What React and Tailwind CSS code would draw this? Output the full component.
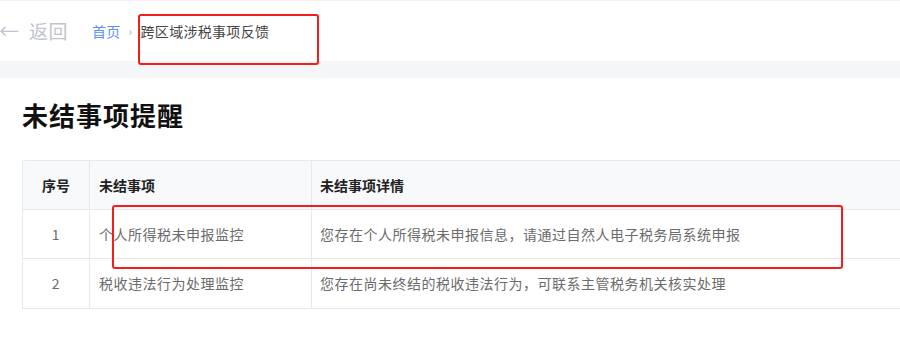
import React from 'react';

const rows = [
  { id: 1, item: '个人所得税未申报监控', detail: '您存在个人所得税未申报信息，请通过自然人电子税务局系统申报' },
  { id: 2, item: '税收违法行为处理监控', detail: '您存在尚未终结的税收违法行为，可联系主管税务机关核实处理' },
];

const App = () => {
  return (
    <div
      className="relative w-[900px] h-[350px] overflow-hidden bg-white"
      style={{ fontFamily: '"Noto Sans CJK SC", "Noto Sans", sans-serif' }}
    >
      {/* Top bar */}
      <div className="h-[61px] border-t border-[#eef1f6] flex items-center">
        <div className="flex items-center text-[#c0c4cc] text-[19px] -ml-[1px] w-[93px]">
          <span className="text-[20px] leading-none mr-[10px]">←</span>
          <span className="tracking-[0.5px]">返回</span>
        </div>
        <div className="flex items-center text-[14px] tracking-[0.3px]">
          <span className="text-[#5b8ff9]">首页</span>
          <span className="text-[#b0b3b8] mx-[8px] text-[12px]">›</span>
          <span className="text-[#444]">跨区域涉税事项反馈</span>
        </div>
      </div>

      {/* Gray band */}
      <div className="h-[17px] bg-[#f5f6f8]" />

      {/* Main */}
      <div className="pl-[22px] pt-[19px]">
        <h1 className="text-[26px] leading-[36px] font-bold text-[#111] tracking-[1px]">未结事项提醒</h1>

        <div className="mt-[27px] w-[900px] border-t border-l border-b border-[#e6e8eb] rounded-tl-[3px] overflow-hidden">
          <div className="flex h-[49px] bg-[#f8f9fb] border-b border-[#e6e8eb] text-[14px] font-bold text-[#222]">
            <div className="w-[67px] flex items-center justify-center border-r border-[#e6e8eb]">序号</div>
            <div className="w-[222px] flex items-center pl-[9px] border-r border-[#e6e8eb]">未结事项</div>
            <div className="flex-1 flex items-center pl-[8px]">未结事项详情</div>
          </div>
          {rows.map((row, i) => (
            <div
              key={row.id}
              className={`flex h-[49px] text-[14px] text-[#6b6b6b] tracking-[0.5px] ${i < rows.length - 1 ? 'border-b border-[#e6e8eb]' : ''}`}
            >
              <div className="w-[67px] flex items-center justify-center border-r border-[#e6e8eb]">{row.id}</div>
              <div className="w-[222px] flex items-center pl-[9px] border-r border-[#e6e8eb]">{row.item}</div>
              <div className="flex-1 flex items-center pl-[8px]">{row.detail}</div>
            </div>
          ))}
        </div>
      </div>

      {/* Annotation boxes */}
      <div className="absolute left-[138px] top-[14px] w-[181px] h-[51px] border-2 border-[#f21d1d] rounded-[3px]" />
      <div className="absolute left-[112px] top-[205px] w-[731px] h-[64px] border-2 border-[#f21d1d] rounded-[3px]" />
    </div>
  );
};

export default App;
